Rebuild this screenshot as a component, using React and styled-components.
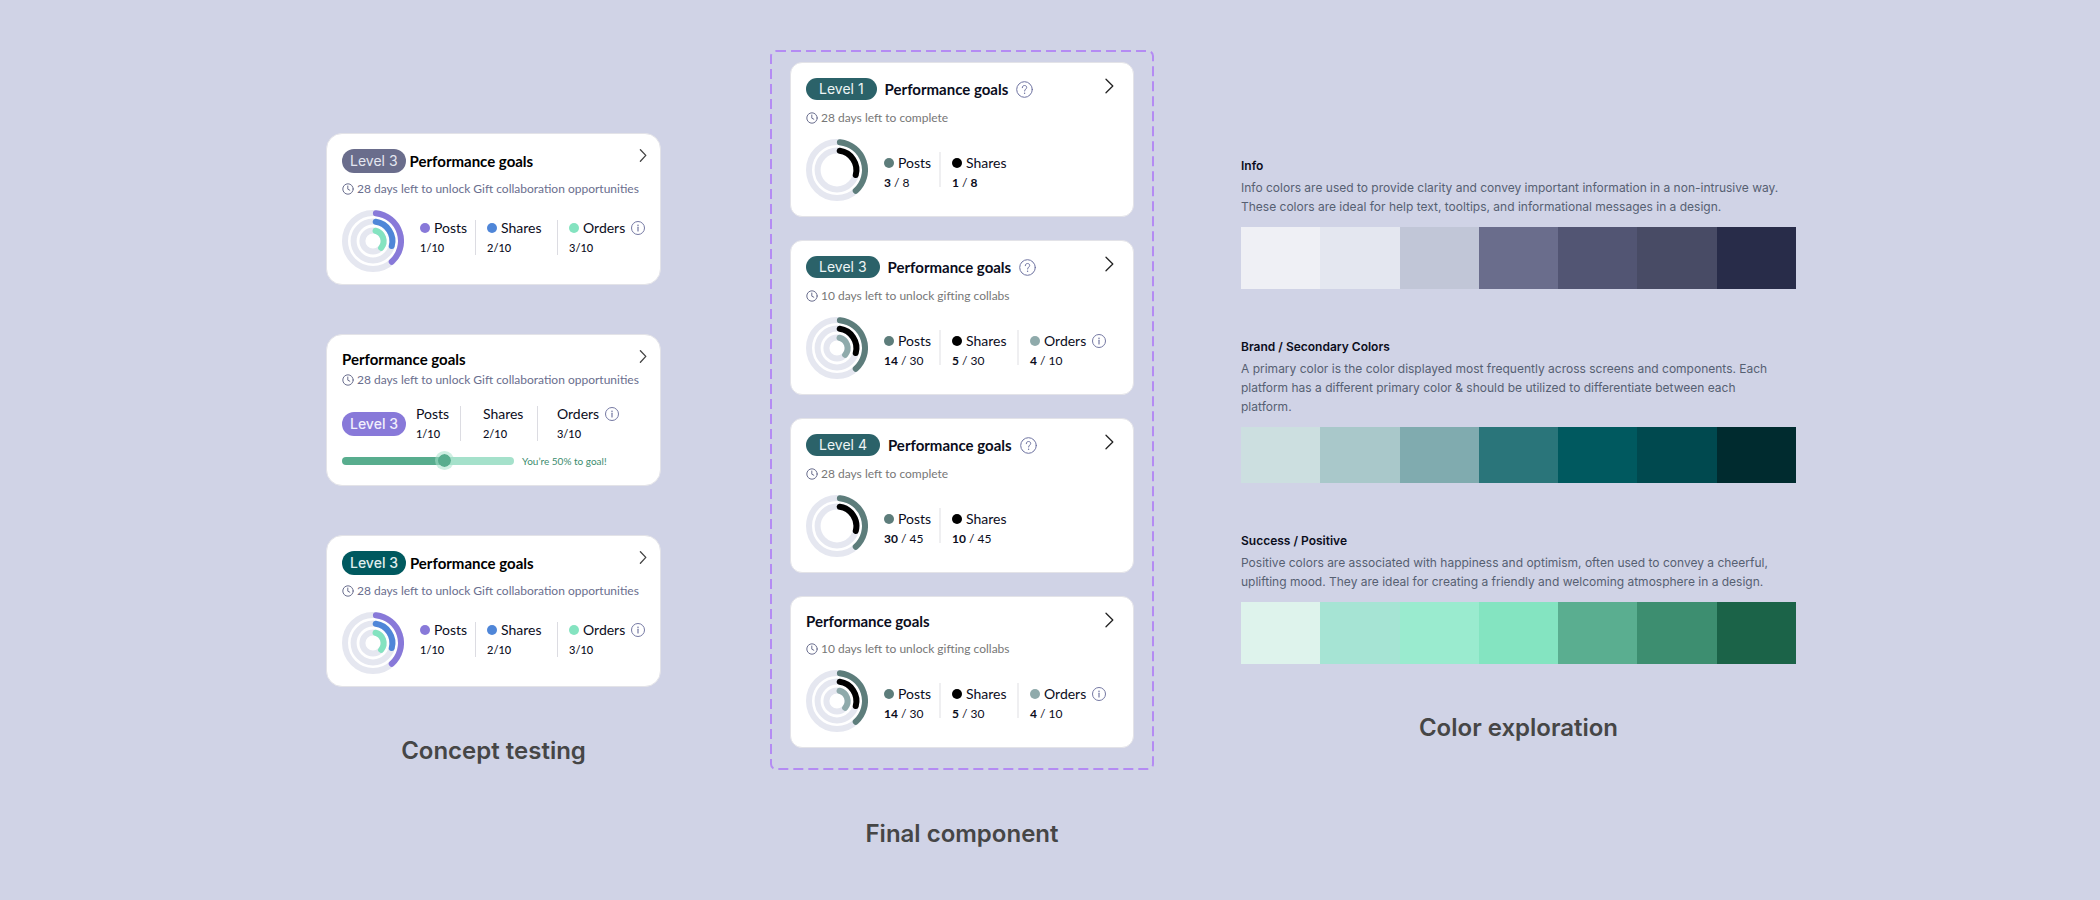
import React from "react";
import styled, { createGlobalStyle } from "styled-components";

const GlobalStyle = createGlobalStyle`
  *, *::before, *::after { box-sizing: border-box; }
  body {
    margin: 0;
    background: #d0d3e6;
    font-family: Inter, "Liberation Sans", sans-serif;
    color: #000;
  }
  h2, h3, p, ul, dl, dt, dd { margin: 0; padding: 0; }
`;

const brandFont = `Lato, "Open Sans", sans-serif`;

const Board = styled.main`
  display: grid;
  grid-template-columns: 357fr 384fr 555fr;
  column-gap: 87px;
  align-items: start;
  min-height: 100vh;
  padding: 50px 304px 48px 326px;
`;

const Column = styled.section`
  display: flex;
  flex-direction: column;
  min-width: 0;
`;

const ConceptColumn = styled(Column)`
  padding: 83px 22px 0 0;
`;

const ColorColumn = styled(Column)`
  padding-top: 107px;
`;

const ColumnTitle = styled.h2`
  margin-top: 48px;
  font-size: 24px;
  line-height: 32px;
  font-weight: 600;
  text-align: center;
  color: #464646;
`;

const CardStack = styled.div`
  display: flex;
  flex-direction: column;
  gap: ${(p) => p.$gap}px;
`;

const Frame = styled.div`
  position: relative;
  padding: 12px 20px 22px;
`;

const FrameOutline = styled.svg`
  position: absolute;
  inset: 1px;
  width: calc(100% - 2px);
  height: calc(100% - 2px);
  overflow: visible;
  pointer-events: none;
`;

const Card = styled.article`
  background: #fff;
  border: 1px solid #e3e3e8;
  border-radius: ${(p) => (p.$final ? 12 : 16)}px;
  padding: ${(p) => (p.$final ? "15px 19px 15px 15px" : "15px 13px 12px 15px")};
  font-family: ${brandFont};
`;

const CardHeader = styled.header`
  display: flex;
  align-items: center;
  gap: ${(p) => p.$gap}px;
  height: ${(p) => p.$height}px;
`;

const LevelPill = styled.span`
  flex: none;
  height: ${(p) => p.$height || 24}px;
  line-height: ${(p) => p.$height || 24}px;
  padding: 0 ${(p) => p.$pad || 8}px;
  border-radius: 12px;
  background: ${(p) => p.$bg};
  color: ${(p) => p.$color || "#fff"};
  font-family: Inter, "Liberation Sans", sans-serif;
  font-size: 14px;
  font-weight: ${(p) => p.$weight || 400};
  white-space: nowrap;
`;

const CardTitle = styled.h3`
  font-size: 15px;
  line-height: 19px;
  font-weight: 700;
  color: ${(p) => (p.$final ? "#0b0d1c" : "#000")};
  white-space: nowrap;
`;

const IconButton = styled.button`
  display: flex;
  flex: none;
  padding: 0;
  border: 0;
  background: none;
  color: ${(p) => p.$color};
  cursor: pointer;
`;

const OpenButton = styled(IconButton)`
  align-self: flex-start;
  margin-left: auto;
`;

const Deadline = styled.p`
  display: flex;
  align-items: center;
  gap: 3px;
  margin-top: ${(p) => p.$gap}px;
  font-size: 12px;
  line-height: 16px;
  color: ${(p) => p.$color};
  white-space: nowrap;
  svg { flex: none; color: #6a6e8e; }
`;

const Progress = styled.div`
  display: flex;
  align-items: flex-start;
  margin-top: 13px;
`;

const Rings = styled.svg`
  flex: none;
  width: 62px;
  height: 62px;
`;

const Metrics = styled.dl`
  display: flex;
  align-items: flex-start;
  padding: ${(p) => (p.$final ? "13px 0 0 16px" : "10px 0 0 16px")};
`;

const Metric = styled.div`
  width: ${(p) => (p.$width ? `${p.$width}px` : "auto")};
  flex: none;
  padding-top: ${(p) => (p.$final ? 3 : 0)}px;
`;

const Separator = styled.div`
  flex: none;
  width: ${(p) => (p.$final ? 2 : 1)}px;
  height: 35px;
  margin-right: ${(p) => p.$after || 11}px;
  background: ${(p) => (p.$final ? "#efeff1" : "#dcdce2")};
`;

const MetricLabel = styled.dt`
  display: flex;
  align-items: center;
  gap: 4px;
  height: 16px;
  font-size: 14px;
  line-height: 16px;
  color: #0b0d1c;
  ${IconButton} { margin-left: 2px; }
`;

const Dot = styled.span`
  flex: none;
  width: 10px;
  height: 10px;
  border-radius: 50%;
  background: ${(p) => p.$color};
`;

const MetricValue = styled.dd`
  margin-top: 4px;
  font-size: ${(p) => (p.$final ? 12 : 11)}px;
  line-height: 16px;
  font-weight: ${(p) => (p.$final ? 400 : 500)};
  color: #0b0d1c;
  b { font-weight: 700; }
`;

const LevelRow = styled.div`
  display: flex;
  align-items: center;
  margin-top: 18px;
`;

const GoalRow = styled.label`
  display: flex;
  align-items: center;
  gap: 8px;
  margin: 9px 0 2px;
  font-size: 10px;
  line-height: 20px;
  color: #3b8c6e;
`;

const GoalSlider = styled.input`
  appearance: none;
  width: 172px;
  height: 19px;
  margin: 0;
  background: transparent;
  &::-webkit-slider-runnable-track {
    height: 8px;
    border-radius: 4px;
    background: linear-gradient(to right, #58ad8e 60%, #a5e1cb 60%);
  }
  &::-webkit-slider-thumb {
    appearance: none;
    width: 19px;
    height: 19px;
    margin-top: -6px;
    border: 3px solid rgba(165, 225, 203, 0.55);
    border-radius: 50%;
    background: #58ad8e;
    background-clip: padding-box;
  }
`;

const PaletteSection = styled.section`
  & + & { margin-top: 49px; }
`;

const PaletteTitle = styled.h3`
  font-size: 12px;
  line-height: 18px;
  font-weight: 600;
  color: #0b0d1c;
`;

const PaletteText = styled.p`
  max-width: 540px;
  margin: 3px 0 11px;
  font-size: 12px;
  line-height: 19px;
  color: #566072;
`;

const Swatches = styled.ul`
  display: flex;
  height: ${(p) => p.$height}px;
  list-style: none;
`;

const Swatch = styled.li`
  flex: 1;
  background: ${(p) => p.$color};
`;

function Chevron({ large }) {
  return (
    <svg
      width={large ? 9 : 8}
      height={large ? 16 : 13}
      viewBox={large ? "0 0 9 16" : "0 0 8 13"}
      fill="none"
      stroke="currentColor"
      strokeWidth="1.3"
      strokeLinecap="round"
      strokeLinejoin="round"
      aria-hidden="true"
    >
      <path d={large ? "M1 1.2 L7.8 8 L1 14.8" : "M1.4 0.7 L6.8 6.4 L1.4 12.2"} />
    </svg>
  );
}

function Clock() {
  return (
    <svg width="12" height="12" viewBox="0 0 12 12" fill="none" stroke="currentColor" strokeLinecap="round" strokeLinejoin="round" aria-hidden="true">
      <circle cx="6" cy="6" r="5.2" />
      <path d="M5.8 3 V6.2 L7.8 7.2" />
    </svg>
  );
}

function InfoIcon() {
  return (
    <svg width="14" height="14" viewBox="0 0 14 14" fill="none" stroke="currentColor" aria-hidden="true">
      <circle cx="7" cy="7" r="6.5" />
      <path d="M7 6.2 V10" strokeWidth="1.2" strokeLinecap="round" />
      <circle cx="7" cy="4.2" r="0.8" fill="currentColor" stroke="none" />
    </svg>
  );
}

function HelpIcon() {
  return (
    <svg width="17" height="17" viewBox="0 0 17 17" fill="none" stroke="currentColor" strokeLinecap="round" aria-hidden="true">
      <circle cx="8.5" cy="8.5" r="7.8" />
      <path d="M6.3 6.7 C6.3 5.3 7.2 4.5 8.5 4.5 C9.8 4.5 10.7 5.3 10.7 6.4 C10.7 8 8.6 8.1 8.6 10" />
      <circle cx="8.6" cy="12.2" r="0.7" fill="currentColor" stroke="none" />
    </svg>
  );
}

const RINGS = [
  { r: 28, start: 6, end: 138 },
  { r: 19.4, start: 8, end: 105 },
  { r: 10.6, start: 14, end: 130 },
];

function arcPath(r, start, end) {
  const at = (deg) => {
    const a = (deg * Math.PI) / 180;
    return `${31 + r * Math.sin(a)} ${31 - r * Math.cos(a)}`;
  };
  return `M${at(start)} A${r} ${r} 0 0 1 ${at(end)}`;
}

function ActivityRings({ colors }) {
  return (
    <Rings viewBox="0 0 62 62" fill="none" strokeWidth="6" strokeLinecap="round" role="img" aria-label="Goal progress">
      {colors.map((color, i) => (
        <g key={color}>
          <circle cx="31" cy="31" r={RINGS[i].r} stroke="#e5e7f0" />
          <path d={arcPath(RINGS[i].r, RINGS[i].start, RINGS[i].end)} stroke={color} />
        </g>
      ))}
    </Rings>
  );
}

const InfoButton = () => (
  <IconButton type="button" aria-label="About orders" $color="#7478a2">
    <InfoIcon />
  </IconButton>
);

const CONCEPT_DEADLINE = "28 days left to unlock Gift collaboration opportunities";

function ConceptCard({ pillBg, pillColor, pillWeight }) {
  return (
    <Card>
      <CardHeader $gap={4} $height={24}>
        <LevelPill $bg={pillBg} $color={pillColor} $weight={pillWeight}>Level 3</LevelPill>
        <CardTitle>Performance goals</CardTitle>
        <OpenButton type="button" aria-label="Open performance goals" $color="#444">
          <Chevron />
        </OpenButton>
      </CardHeader>
      <Deadline $gap={8} $color="#6a6e8e">
        <Clock />
        {CONCEPT_DEADLINE}
      </Deadline>
      <Progress>
        <ActivityRings colors={["#8879d9", "#4f86d8", "#84e3c0"]} />
        <Metrics>
          <Metric $width={55}>
            <MetricLabel><Dot $color="#8879d9" />Posts</MetricLabel>
            <MetricValue>1/10</MetricValue>
          </Metric>
          <Separator />
          <Metric $width={70}>
            <MetricLabel><Dot $color="#4f86d8" />Shares</MetricLabel>
            <MetricValue>2/10</MetricValue>
          </Metric>
          <Separator />
          <Metric>
            <MetricLabel><Dot $color="#84e3c0" />Orders<InfoButton /></MetricLabel>
            <MetricValue>3/10</MetricValue>
          </Metric>
        </Metrics>
      </Progress>
    </Card>
  );
}

const LevelMetrics = styled(Metrics)`
  padding: 0 0 0 10px;
`;

function SliderCard() {
  return (
    <Card>
      <CardHeader $gap={0} $height={19}>
        <CardTitle>Performance goals</CardTitle>
        <OpenButton type="button" aria-label="Open performance goals" $color="#444">
          <Chevron />
        </OpenButton>
      </CardHeader>
      <Deadline $gap={3} $color="#6a6e8e">
        <Clock />
        {CONCEPT_DEADLINE}
      </Deadline>
      <LevelRow>
        <LevelPill $bg="#8879d9" $color="#f1effc" $weight={500}>Level 3</LevelPill>
        <LevelMetrics>
          <Metric $width={44}>
            <MetricLabel>Posts</MetricLabel>
            <MetricValue>1/10</MetricValue>
          </Metric>
          <Separator $after={22} />
          <Metric $width={54}>
            <MetricLabel>Shares</MetricLabel>
            <MetricValue>2/10</MetricValue>
          </Metric>
          <Separator $after={19} />
          <Metric>
            <MetricLabel>Orders<InfoButton /></MetricLabel>
            <MetricValue>3/10</MetricValue>
          </Metric>
        </LevelMetrics>
      </LevelRow>
      <GoalRow>
        <GoalSlider type="range" min="0" max="100" defaultValue="61" />
        You’re 50% to goal!
      </GoalRow>
    </Card>
  );
}

const FINAL_COLORS = ["#5d7d7b", "#000000", "#8faaab"];

function FinalCard({ level, deadline, metrics }) {
  return (
    <Card $final>
      <CardHeader $gap={8} $height={level ? 22 : 19}>
        {level && <LevelPill $bg="#2b6269" $color="#eef5f5" $height={22} $pad={13}>Level {level}</LevelPill>}
        <CardTitle $final>Performance goals</CardTitle>
        {level && (
          <IconButton type="button" aria-label="About performance goals" $color="#6d72a0">
            <HelpIcon />
          </IconButton>
        )}
        <OpenButton type="button" aria-label="Open performance goals" $color="#222">
          <Chevron large />
        </OpenButton>
      </CardHeader>
      <Deadline $gap={10} $color="#777">
        <Clock />
        {deadline}
      </Deadline>
      <Progress>
        <ActivityRings colors={FINAL_COLORS.slice(0, metrics.length)} />
        <Metrics $final>
          {metrics.map(([name, done, goal, boldGoal], i) => (
            <React.Fragment key={name}>
              {i > 0 && <Separator $final />}
              <Metric $final $width={[55, 65][i]}>
                <MetricLabel>
                  <Dot $color={FINAL_COLORS[i]} />
                  {name}
                  {name === "Orders" && <InfoButton />}
                </MetricLabel>
                <MetricValue $final>
                  <b>{done}</b> / {boldGoal ? <b>{goal}</b> : goal}
                </MetricValue>
              </Metric>
            </React.Fragment>
          ))}
        </Metrics>
      </Progress>
    </Card>
  );
}

const FINAL_CARDS = [
  { level: 1, deadline: "28 days left to complete", metrics: [["Posts", 3, 8], ["Shares", 1, 8, true]] },
  { level: 3, deadline: "10 days left to unlock gifting collabs", metrics: [["Posts", 14, 30], ["Shares", 5, 30], ["Orders", 4, 10]] },
  { level: 4, deadline: "28 days left to complete", metrics: [["Posts", 30, 45], ["Shares", 10, 45]] },
  { deadline: "10 days left to unlock gifting collabs", metrics: [["Posts", 14, 30], ["Shares", 5, 30], ["Orders", 4, 10]] },
];

const PALETTES = [
  {
    title: "Info",
    text: "Info colors are used to provide clarity and convey important information in a non-intrusive way. These colors are ideal for help text, tooltips, and informational messages in a design.",
    height: 62,
    colors: ["#eff0f5", "#e4e7f0", "#c1c6d7", "#6a6d8c", "#525573", "#484b65", "#282c49"],
  },
  {
    title: "Brand / Secondary Colors",
    text: "A primary color is the color displayed most frequently across screens and components. Each platform has a different primary color & should be utilized to differentiate between each platform.",
    height: 56,
    colors: ["#ccdfe0", "#a9c8ca", "#80abaf", "#2a757a", "#00595f", "#00494f", "#002b2f"],
  },
  {
    title: "Success / Positive",
    text: "Positive colors are associated with happiness and optimism, often used to convey a cheerful, uplifting mood. They are ideal for creating a friendly and welcoming atmosphere in a design.",
    height: 62,
    colors: ["#def3ec", "#a6e4d4", "#9aebcf", "#84e4c1", "#5aae90", "#3d8e70", "#1b6348"],
  },
];

export default function App() {
  return (
    <>
      <GlobalStyle />
      <Board>
        <ConceptColumn>
          <CardStack $gap={49}>
            <ConceptCard pillBg="#6a6d8c" pillColor="#e4e6f0" pillWeight={400} />
            <SliderCard />
            <ConceptCard pillBg="#00595f" pillColor="#e0eeee" pillWeight={500} />
          </CardStack>
          <ColumnTitle>Concept testing</ColumnTitle>
        </ConceptColumn>

        <Column>
          <Frame>
            <FrameOutline aria-hidden="true">
              <rect width="100%" height="100%" rx="5" fill="none" stroke="#b48bf3" strokeWidth="2" strokeDasharray="10 5" />
            </FrameOutline>
            <CardStack $gap={23}>
              {FINAL_CARDS.map((card, i) => (
                <FinalCard key={i} {...card} />
              ))}
            </CardStack>
          </Frame>
          <ColumnTitle>Final component</ColumnTitle>
        </Column>

        <ColorColumn>
          {PALETTES.map(({ title, text, height, colors }) => (
            <PaletteSection key={title}>
              <PaletteTitle>{title}</PaletteTitle>
              <PaletteText>{text}</PaletteText>
              <Swatches $height={height}>
                {colors.map((color) => (
                  <Swatch key={color} $color={color} />
                ))}
              </Swatches>
            </PaletteSection>
          ))}
          <ColumnTitle>Color exploration</ColumnTitle>
        </ColorColumn>
      </Board>
    </>
  );
}
